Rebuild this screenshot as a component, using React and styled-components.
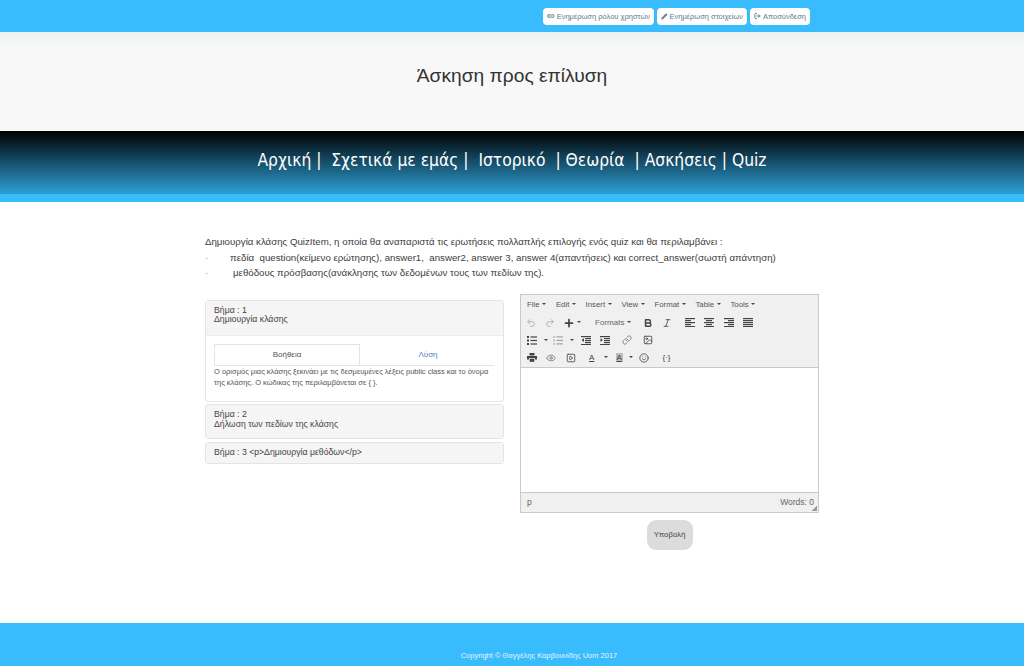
import React from 'react';
import styled, { createGlobalStyle } from 'styled-components';
import { Link2, Pencil, LogOut, Undo2, Redo2, Plus, Bold, Italic, Link, Image, Eye, SquarePlay, Smile } from 'lucide-react';

const Global = createGlobalStyle`
  html, body { margin: 0; padding: 0; background: #fff; }
  body { font-family: "Liberation Sans", Arial, sans-serif; color: #333; }
  * { box-sizing: border-box; }
`;
const Page = styled.div`width: 1024px; height: 666px; display: flex; flex-direction: column; overflow: hidden;`;
const TopBar = styled.div`height: 32px; background: #38bcfd; display: flex; align-items: center; gap: 3px; padding: 0 0 0 543px;`;
const TopButton = styled.a`
  height: 17px; background: #fff; border-radius: 4px; display: flex; align-items: center; gap: 2px;
  padding: 0 4px; font-size: 7.5px; color: #5f7890; white-space: nowrap; width: ${p => p.$w}px;
`;
const Hero = styled.div`
  height: 99px; background: linear-gradient(#eef1f3 0, #f8f8f8 14px, #f8f8f8 100%);
  display: flex; justify-content: center; padding-top: 32px;
  font-size: 19.2px; line-height: 24px; color: #333;
`;
const Nav = styled.nav`
  height: 71px; padding-top: 18px; display: flex; justify-content: center; white-space: pre;
  background: linear-gradient(#000 0, #2d9fd6 63px, #38bcfd 63px, #38bcfd 100%);
  color: #fff; font-family: "DejaVu Sans Condensed", "DejaVu Sans", sans-serif; font-stretch: condensed;
  font-size: 17.3px; line-height: 22px;
`;
const Main = styled.main`flex: 1; width: 614px; margin-left: 205px; padding-top: 32px;`;
const Intro = styled.div`font-size: 9.7px; line-height: 15.5px; color: #3c3c3c;`;
const Bullet = styled.div`display: flex; white-space: pre;`;
const Dot = styled.span`width: ${p => p.$w}px; color: #999;`;
const Columns = styled.div`display: grid; grid-template-columns: 299px 299px; column-gap: 16px; margin-top: 13px; align-items: start;`;
const Accordion = styled.div`display: flex; flex-direction: column; gap: 2.5px; padding-top: 6px;`;
const Panel = styled.div`border: 1px solid #e4e4e4; border-radius: 3px; background: #fff;`;
const PanelHead = styled.div`background: #f5f5f5; padding: 5px 8px; font-size: 8.7px; line-height: 9.5px; color: #444; min-height: ${p => p.$h}px;`;
const PanelBody = styled.div`padding: 8px; height: 66px; border-top: 1px solid #ececec;`;
const Tabs = styled.div`display: grid; grid-template-columns: 146px 136px; height: 22px; border-bottom: 1px solid #e4e4e4;`;
const Tab = styled.div`
  font-size: 8px; display: flex; align-items: center; justify-content: center;
  color: ${p => p.$active ? '#555' : '#4c86b8'};
  ${p => p.$active ? 'border: 1px solid #e4e4e4; border-bottom: 0; background: #fff;' : ''}
`;
const TabText = styled.div`font-size: 7.5px; line-height: 11.5px; color: #555;`;
const Editor = styled.div`border: 1px solid #c9c9c9; height: 219px; display: flex; flex-direction: column; background: #fff;`;
const Chrome = styled.div`background: #f0f0f0; height: 73px; border-bottom: 1px solid #c9c9c9; display: flex; flex-direction: column;`;
const MenuBar = styled.div`height: 20px; display: flex; align-items: center; padding-left: 6px; gap: 9.8px; font-size: 7.8px; color: #555;`;
const Caret = styled.i`display: inline-block; flex: none; width: 0; height: 0; border: 2px solid transparent; border-top: 2.5px solid #444; border-bottom: 0; margin: 0 0 1px 2.5px; vertical-align: middle;`;
const ToolRow = styled.div`height: 17.8px; display: flex; align-items: center; padding-left: ${p => p.$pl || 0}px;`;
const Tool = styled.span`
  width: ${p => p.$w || 19.5}px; flex: none; display: flex; align-items: center; justify-content: center;
  gap: ${p => p.$g || 0}px; margin-left: ${p => p.$ml || 0}px; padding-left: ${p => p.$pl || 0}px;
  color: ${p => p.$c || '#444'}; font-size: 8px;
  svg { display: block; }
`;
const LetterA = styled.span`
  font-size: 8px; line-height: 9px; padding: 0 1px; text-decoration: underline;
  background: ${p => p.$boxed ? '#bdbdbd' : 'transparent'};
`;
const Write = styled.div`flex: 1;`;
const Status = styled.div`position: relative; height: 20px; background: #f0f0f0; border-top: 1px solid #c9c9c9; display: flex; align-items: center; justify-content: space-between; padding: 0 4px 0 6px; font-size: 8.5px; color: #666;`;
const Grip = styled.span`position: absolute; right: 1px; bottom: 1px; width: 5px; height: 5px; background: linear-gradient(135deg, transparent 50%, #999 50%);`;
const SubmitRow = styled.div`display: flex; justify-content: center; margin-top: 7px;`;
const Submit = styled.button`width: 46px; height: 30px; background: #dcdcdc; border: 0; border-radius: 9px; font: 7.8px "Liberation Sans", sans-serif; color: #444; padding: 0;`;
const Footer = styled.footer`height: 43px; background: #38bcfd; color: #e4f5ff; font-size: 7.5px; display: flex; justify-content: center; padding: 28px 0 0 54px; line-height: 10px;`;

const Lines = ({ rows }) => (
  <svg width="10" height="9" viewBox="0 0 10 9" fill="currentColor">
    {rows.map(([x, w], i) => <rect key={i} x={x} y={i * 2} width={w} height="1.2" />)}
  </svg>
);
const alignL = [[0, 10], [0, 6], [0, 10], [0, 6], [0, 10]];
const alignC = [[0, 10], [2, 6], [0, 10], [2, 6], [0, 10]];
const alignR = [[0, 10], [4, 6], [0, 10], [4, 6], [0, 10]];
const alignJ = [[0, 10], [0, 10], [0, 10], [0, 10], [0, 10]];

const Indent = ({ out }) => (
  <svg width="10" height="9" viewBox="0 0 10 9" fill="currentColor">
    <rect x="0" y="0" width="10" height="1.2" /><rect x="4" y="2" width="6" height="1.2" />
    <rect x="4" y="4" width="6" height="1.2" /><rect x="4" y="6" width="6" height="1.2" />
    <rect x="0" y="8" width="10" height="1.2" />
    <path d={out ? 'M3 2.2V6L0.5 4.1Z' : 'M0.5 2.2V6L3 4.1Z'} />
  </svg>
);
const Bullets = () => (
  <svg width="10" height="9" viewBox="0 0 10 9" fill="currentColor">
    {[0, 3.5, 7].map(y => <g key={y}><rect x="0" y={y} width="2" height="2" /><rect x="3.5" y={y + .4} width="6.5" height="1.2" /></g>)}
  </svg>
);
const Numbers = () => (
  <svg width="10" height="9" viewBox="0 0 10 9" fill="currentColor">
    {[0, 3.5, 7].map(y => <g key={y}><rect x="0.5" y={y} width="1" height="2" opacity=".7" /><rect x="3.5" y={y + .4} width="6.5" height="1" opacity=".75" /></g>)}
  </svg>
);
const Printer = () => (
  <svg width="10" height="9" viewBox="0 0 10 9" fill="currentColor">
    <rect x="2.5" y="0" width="5" height="2.5" /><path d="M0 3h10v3.5H8V5H2v1.5H0z" /><rect x="2.7" y="5.7" width="4.6" height="3.1" />
  </svg>
);

const Ic = { size: 10, strokeWidth: 2 };

export default function App() {
  return (
    <Page>
      <Global />
      <TopBar>
        <TopButton $w={111}><Link2 size={8} strokeWidth={3} />Ενημέρωση ρόλου χρηστών</TopButton>
        <TopButton $w={90}><Pencil size={7} fill="#5f7890" />Ενημέρωση στοιχείων</TopButton>
        <TopButton $w={60}><LogOut size={8} strokeWidth={3} />Αποσύνδεση</TopButton>
      </TopBar>
      <Hero>Άσκηση προς επίλυση</Hero>
      <Nav>{'Αρχική |  Σχετικά με εμάς |  Ιστορικό  | Θεωρία  | Ασκήσεις | Quiz'}</Nav>
      <Main>
        <Intro>
          <div>Δημιουργία κλάσης QuizItem, η οποία θα αναπαριστά τις ερωτήσεις πολλαπλής επιλογής ενός quiz και θα περιλαμβάνει :</div>
          <Bullet><Dot $w={25}>·</Dot>{'πεδία  question(κείμενο ερώτησης), answer1,  answer2, answer 3, answer 4(απαντήσεις) και correct_answer(σωστή απάντηση)'}</Bullet>
          <Bullet><Dot $w={28}>·</Dot>μεθόδους πρόσβασης(ανάκλησης των δεδομένων τους των πεδίων της).</Bullet>
        </Intro>
        <Columns>
          <Accordion>
            <Panel>
              <PanelHead $h={34}>Βήμα : 1<br />Δημιουργία κλάσης</PanelHead>
              <PanelBody>
                <Tabs><Tab $active>Βοήθεια</Tab><Tab>Λύση</Tab></Tabs>
                <TabText>{'Ο ορισμός μιας κλάσης ξεκινάει με τις δεσμευμένες λέξεις public class και το όνομα της κλάσης.  Ο κώδικας της περιλαμβάνεται σε { }.'}</TabText>
              </PanelBody>
            </Panel>
            <Panel><PanelHead $h={33}>Βήμα : 2<br />Δήλωση των πεδίων της κλάσης</PanelHead></Panel>
            <Panel><PanelHead $h={20}>Βήμα : 3 &lt;p&gt;Δημιουργία μεθόδων&lt;/p&gt;</PanelHead></Panel>
          </Accordion>
          <div>
            <Editor>
              <Chrome>
                <MenuBar>
                  {['File', 'Edit', 'Insert', 'View', 'Format', 'Table', 'Tools'].map(m => <span key={m}>{m}<Caret /></span>)}
                </MenuBar>
                <ToolRow>
                  <Tool $c="#aaa"><Undo2 {...Ic} /></Tool><Tool $c="#aaa"><Redo2 {...Ic} /></Tool>
                  <Tool $w={24}><Plus size={12} strokeWidth={3.5} /><Caret /></Tool>
                  <Tool $w={54} $pl={4} $c="#666">Formats<Caret /></Tool>
                  <Tool><Bold size={10} strokeWidth={3.5} /></Tool><Tool><Italic {...Ic} /></Tool>
                  <Tool $ml={3}><Lines rows={alignL} /></Tool><Tool><Lines rows={alignC} /></Tool><Tool><Lines rows={alignR} /></Tool><Tool><Lines rows={alignJ} /></Tool>
                </ToolRow>
                <ToolRow $pl={3}>
                  <Tool $w={27} $g={4}><Bullets /><Caret /></Tool>
                  <Tool $w={25} $g={4} $c="#777"><Numbers /><Caret /></Tool>
                  <Tool><Indent out /></Tool><Tool><Indent /></Tool>
                  <Tool $w={24} $c="#777"><Link {...Ic} /></Tool><Tool $w={17}><Image {...Ic} /></Tool>
                </ToolRow>
                <ToolRow $pl={1}>
                  <Tool><Printer /></Tool><Tool $c="#777"><Eye {...Ic} /></Tool><Tool><SquarePlay {...Ic} /></Tool>
                  <Tool $w={29} $ml={3} $g={6}><LetterA>A</LetterA><Caret /></Tool>
                  <Tool $w={24} $g={4}><LetterA $boxed>A</LetterA><Caret /></Tool>
                  <Tool $w={14}><Smile {...Ic} /></Tool>
                  <Tool $w={32}>{'{·}'}</Tool>
                </ToolRow>
              </Chrome>
              <Write />
              <Status><span>p</span><span>Words: 0</span><Grip /></Status>
            </Editor>
            <SubmitRow><Submit>Υποβολή</Submit></SubmitRow>
          </div>
        </Columns>
      </Main>
      <Footer>Copyright © Θαγγέλης Καρβουνίδης Uom 2017</Footer>
    </Page>
  );
}
